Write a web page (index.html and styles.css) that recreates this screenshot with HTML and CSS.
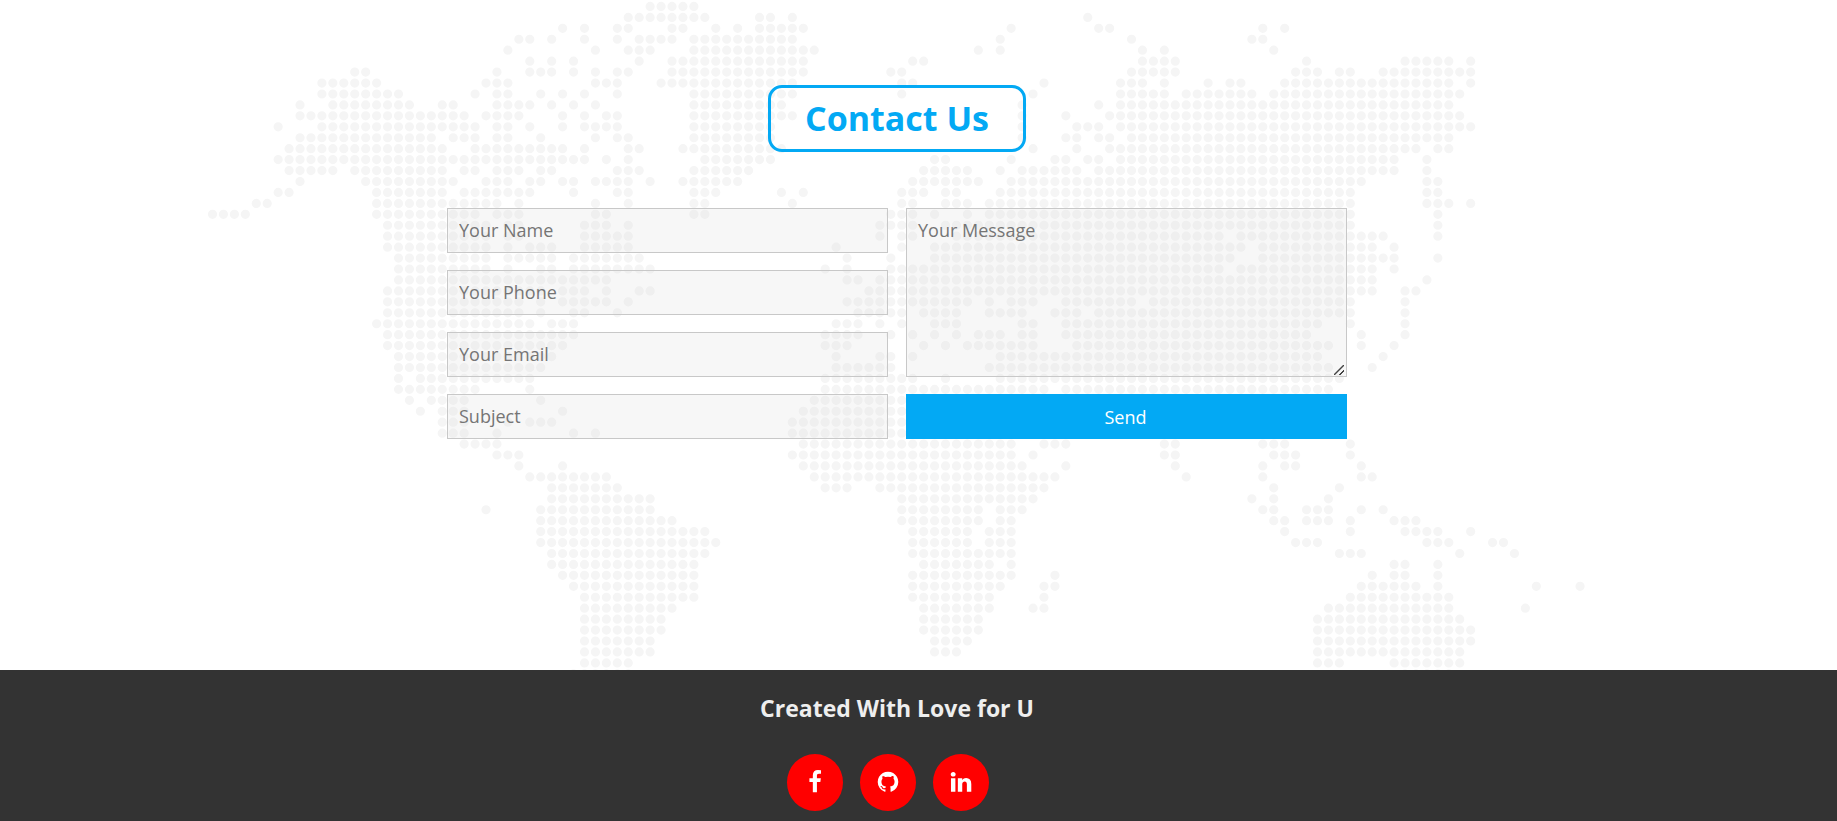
FILE: index.html
```html
<!DOCTYPE html>
<html lang="en">
<head>
<meta charset="utf-8">
<meta name="viewport" content="width=device-width, initial-scale=1">
<title>Contact Us</title>
<link rel="stylesheet" href="styles.css">
</head>
<body>
<main class="contact">
  <svg class="map" viewBox="-19.45 -0.59 167.96 61.24" preserveAspectRatio="xMidYMid slice" aria-hidden="true"><path id="map-dots" d=""/></svg>
  <h1 class="title">Contact Us</h1>
  <form class="form">
    <div class="column">
      <input class="field" type="text" name="name" placeholder="Your Name" aria-label="Your Name">
      <input class="field" type="tel" name="phone" placeholder="Your Phone" aria-label="Your Phone">
      <input class="field" type="email" name="email" placeholder="Your Email" aria-label="Your Email">
      <input class="field" type="text" name="subject" placeholder="Subject" aria-label="Subject">
    </div>
    <div class="column">
      <textarea class="field message" name="message" placeholder="Your Message" aria-label="Your Message"></textarea>
      <button class="send" type="submit">Send</button>
    </div>
  </form>
</main>
<footer class="footer">
  <h2 class="credit">Created With Love for U</h2>
  <nav class="social" aria-label="Social links">
    <a class="social-link" href="#" aria-label="Facebook"><svg class="icon" viewBox="0 0 1792 1792"><path d="M1343 12v264h-157q-86 0-116 36t-30 108v189h293l-39 296h-254v759h-306v-759h-255v-296h255v-218q0-186 104-288.500t277-102.500q147 0 228 12z"/></svg></a>
    <a class="social-link" href="#" aria-label="GitHub"><svg class="icon" viewBox="0 0 1792 1792"><path d="M896 128q209 0 385.500 103t279.500 279.500 103 385.500q0 251-146.500 451.500t-378.500 277.500q-27 5-40-7t-13-30q0-3 .5-76.500t.5-134.500q0-97-52-142 57-6 102.500-18t94-39 81-66.500 53-105 20.500-150.500q0-119-79-206 37-91-8-204-28-9-81 11t-92 44l-38 24q-93-26-192-26t-192 26q-16-11-42.500-27t-83.500-38.500-85-13.500q-45 113-8 204-79 87-79 206 0 85 20.500 150t52.500 105 80.500 67 94 39 102.500 18q-39 36-49 103-21 10-45 15t-57 5-65.500-21.500-55.500-62.500q-19-32-48.500-52t-49.500-24l-20-3q-21 0-29 4.500t-5 11.500 9 14 13 12l7 5q22 10 43.500 38t31.500 51l10 23q13 38 44 61.500t67 30 69.500 7 55.500-3.500l23-4q0 38 .5 88.500t.5 54.500q0 18-13 30t-40 7q-232-77-378.500-277.500t-146.500-451.500q0-209 103-385.500t279.500-279.500 385.500-103z"/></svg></a>
    <a class="social-link" href="#" aria-label="LinkedIn"><svg class="icon" viewBox="0 0 1792 1792"><path d="M477 625v991h-330v-991h330zm21-306q1 73-50.500 122t-135.500 49h-2q-82 0-132-49t-50-122q0-74 51.500-122.500t134.500-48.500 133 48.500 51 122.500zm1166 729v568h-329v-530q0-105-40.500-164.500t-126.500-59.500q-63 0-105.500 34.500t-63.500 85.500q-11 30-11 81v553h-329q2-399 2-647t-1-296l-1-48h329v144h-2q20-32 41-56t56.500-52 87-43.500 114.500-15.500q171 0 275 113.500t104 332.500z"/></svg></a>
  </nav>
</footer>
<script src="map.js"></script>
</body>
</html>
```
FILE: styles.css
```css
* {
  box-sizing: border-box;
}

body {
  margin: 0;
  background: #fff;
  font-family: "Open Sans", "Noto Sans", sans-serif;
}

.contact {
  position: relative;
  overflow: hidden;
  display: flex;
  flex-direction: column;
  align-items: center;
  padding: 85px 43px 231px 0;
}

.map {
  position: absolute;
  inset: 0;
  width: 100%;
  height: 100%;
  fill: none;
  stroke: #f5f5f5;
  stroke-width: 0.84;
  stroke-linecap: round;
  stroke-dasharray: 0 1;
}

.title {
  position: relative;
  margin: 0 0 56px;
  padding: 8px 34px;
  border: 3px solid #03a9f4;
  border-radius: 14px;
  color: #03a9f4;
  font-size: 34px;
  line-height: 45px;
}

.form {
  position: relative;
  display: grid;
  grid-template-columns: 1fr 1fr;
  gap: 18px;
  width: 100%;
  max-width: 900px;
}

.column {
  display: flex;
  flex-direction: column;
  gap: 17px;
}

.field {
  display: block;
  width: 100%;
  height: 45px;
  padding: 9px 11px 11px;
  border: 1px solid #c8c8c8;
  border-radius: 0;
  background: rgba(216, 216, 216, 0.2);
  color: #333;
  font: 18px/25px "Open Sans", "Noto Sans", sans-serif;
}

.field::placeholder {
  color: #757575;
}

.message {
  flex: 1;
  resize: vertical;
}

.message::-webkit-resizer {
  background: linear-gradient(135deg, transparent 44%, #444 46%, #444 54%, transparent 56%, transparent 72%, #444 74%, #444 82%, transparent 84%) 3px 4px / 10px 10px no-repeat;
}

.send {
  height: 45px;
  padding: 2px 2px 0 0;
  border: 0;
  background: #03a9f4;
  color: #fff;
  font: 18px/25px "Open Sans", "Noto Sans", sans-serif;
}

.footer {
  padding: 20px 43px 10px 0;
  background: #333;
  text-align: center;
}

.credit {
  margin: 0 0 28px;
  color: #eee;
  font-size: 23px;
  font-weight: 700;
  line-height: 36px;
}

.social {
  display: flex;
  justify-content: center;
  gap: 17px;
  padding-right: 19px;
}

.social-link {
  display: flex;
  align-items: center;
  justify-content: center;
  width: 56px;
  height: 57px;
  border-radius: 50%;
  background: #f00;
}

.icon {
  width: 24px;
  height: 24px;
  margin-bottom: 2px;
  fill: #fff;
}
```
FILE: map.js
```js
// One entry per map row: runs of filled columns, "first-last" or a single column.
const rows = [
  "40-44",
  "38-45 50-51 53 80",
  "32 34 37-38 42-43 46 48 50-54 73 81-82 96 98",
  "28-29 31 34 37 39-42 44-53 72 84 95-96",
  "27 35 38-40 44-55 70 72 85 87 97",
  "29 31 33 39 42-54 64-65 85-88 100 109-113 115",
  "13-14 26 29-31 33 35 37-38 42-54 62-63 84-88 99-101 103-104 107-115",
  "10-15 25-27 35-37 41-53 63-64 76 83-85 87 91 93-94 98-113 115",
  "10-17 24 26-27 30 32 34 37 44-53 63 75 83-87 89-95 97-114",
  "8 11-18 21-22 26-29 31 33 35 44-52 74 81 83-113",
  "8-23 25-28 32 34 36-37 44-53 74 78 82-114",
  "6 10-24 26-27 29 32 34-37 44-51 74 79-81 83-115",
  "8-20 22-24 26-27 30 35 37-38 44-51 74 78-79 81-82 84-113",
  "7-21 24-32 34 38-39 43-52 75 79 82-110 112-113",
  "6-34 36 38 45-51 66-67 73 77-78 80-81 83-108 111",
  "7-11 13-21 23-24 26-28 30-31 37-39 44-49 65-69 72 74-79 81-108 111",
  "8 14-22 25-27 29-30 32-33 35-38 40 43-48 64-70 73-105 111-112",
  "6-7 15-21 23-29 33 37-38 44-46 52 54 63-65 67-68 72-104 111-112",
  "4-5 15-26 28 35 38 44-45 53 63-64 67-69 71-104 111-113 115",
  "0-3 15-24 26-28 35-36 44-45 62-64 66 69 71-104 112",
  "16-25 27-28 34-36 38 61-64 67-104 112",
  "16-25 27-28 34-38 61 63-64 68-92 94-107 112",
  "16-25 27 29-31 34-38 57 63 66-94 96-106 108",
  "17-25 27-31 33-39 58 62 66-93 96-108 112",
  "17-25 27 30-31 33-40 56 58 62-92 94-106 108",
  "17-36 58-59 61-106 111",
  "16-30 32-34 36 39-40 60-106 109-110",
  "16-28 30 32-36 38 58-69 71 73-75 78-84 86-104 109",
  "16-28 30 33-34 37 59-63 65-68 71-74 77-79 81-104 109",
  "15-29 31-33 57-59 61 63 66-68 74-75 78-101 104 109",
  "16-33 56-59 62 64 66 68 70-72 74-75 78-100 105 109",
  "16-32 56-58 65 67 69-75 79-102 105 108",
  "17-31 57 61-62 64 72-101 107",
  "17-30 57-62 71-102 106",
  "17 19-29 56-64 67 72-103",
  "17-24 29 56-76 78-102",
  "18 20-23 30 55-74",
  "19 21-23 32 54-74",
  "21-23 27 29-31 53-74",
  "21-23 26 33 35 53-74",
  "23-26 54-73 76-78 87-88 96-98 104",
  "26-28 53-73 75 87-88 97-99 104",
  "28 32 54-74 78 88 96 98-99 105",
  "29-36 55-77 89 96 105-106",
  "31-37 56-58 61-76 97 103",
  "31-40 63-75 95 97 102",
  "25 30-40 63-70 72-74 96-97 100-102 105 107",
  "30-42 63-70 72-73 97-98 100-102 104 108-110",
  "30-45 64-69 71-73 98 104 109-112 115",
  "30-46 64-69 71-73 99-101 111-113 117-118",
  "31-45 64-73 103-105 114 119",
  "31-44 65-71 73 108-109 112",
  "32-44 64-73 77 106 108-109 112",
  "33-44 64-72 76-77 105-110 112 121 125",
  "34-44 64-71 76 104-113",
  "34-42 65-71 75-76 102-113 120",
  "34-41 65-70 101-114",
  "34-41 65-70 101-115",
  "34-40 66-69 101-115",
  "34-40 66-68 101-114",
  "34-38 101-103 108-114",
  "33-38 109-113"
];

// Each run is a line drawn as zero-length round dashes, one per grid column.
const path = rows.map((row, y) =>
  row.split(" ").map((run) => {
    const [first, last = first] = run.split("-").map(Number);
    return `M${first} ${y}h${last - first + 0.05}`;
  }).join("")
).join("");

document.getElementById("map-dots").setAttribute("d", path);
```
